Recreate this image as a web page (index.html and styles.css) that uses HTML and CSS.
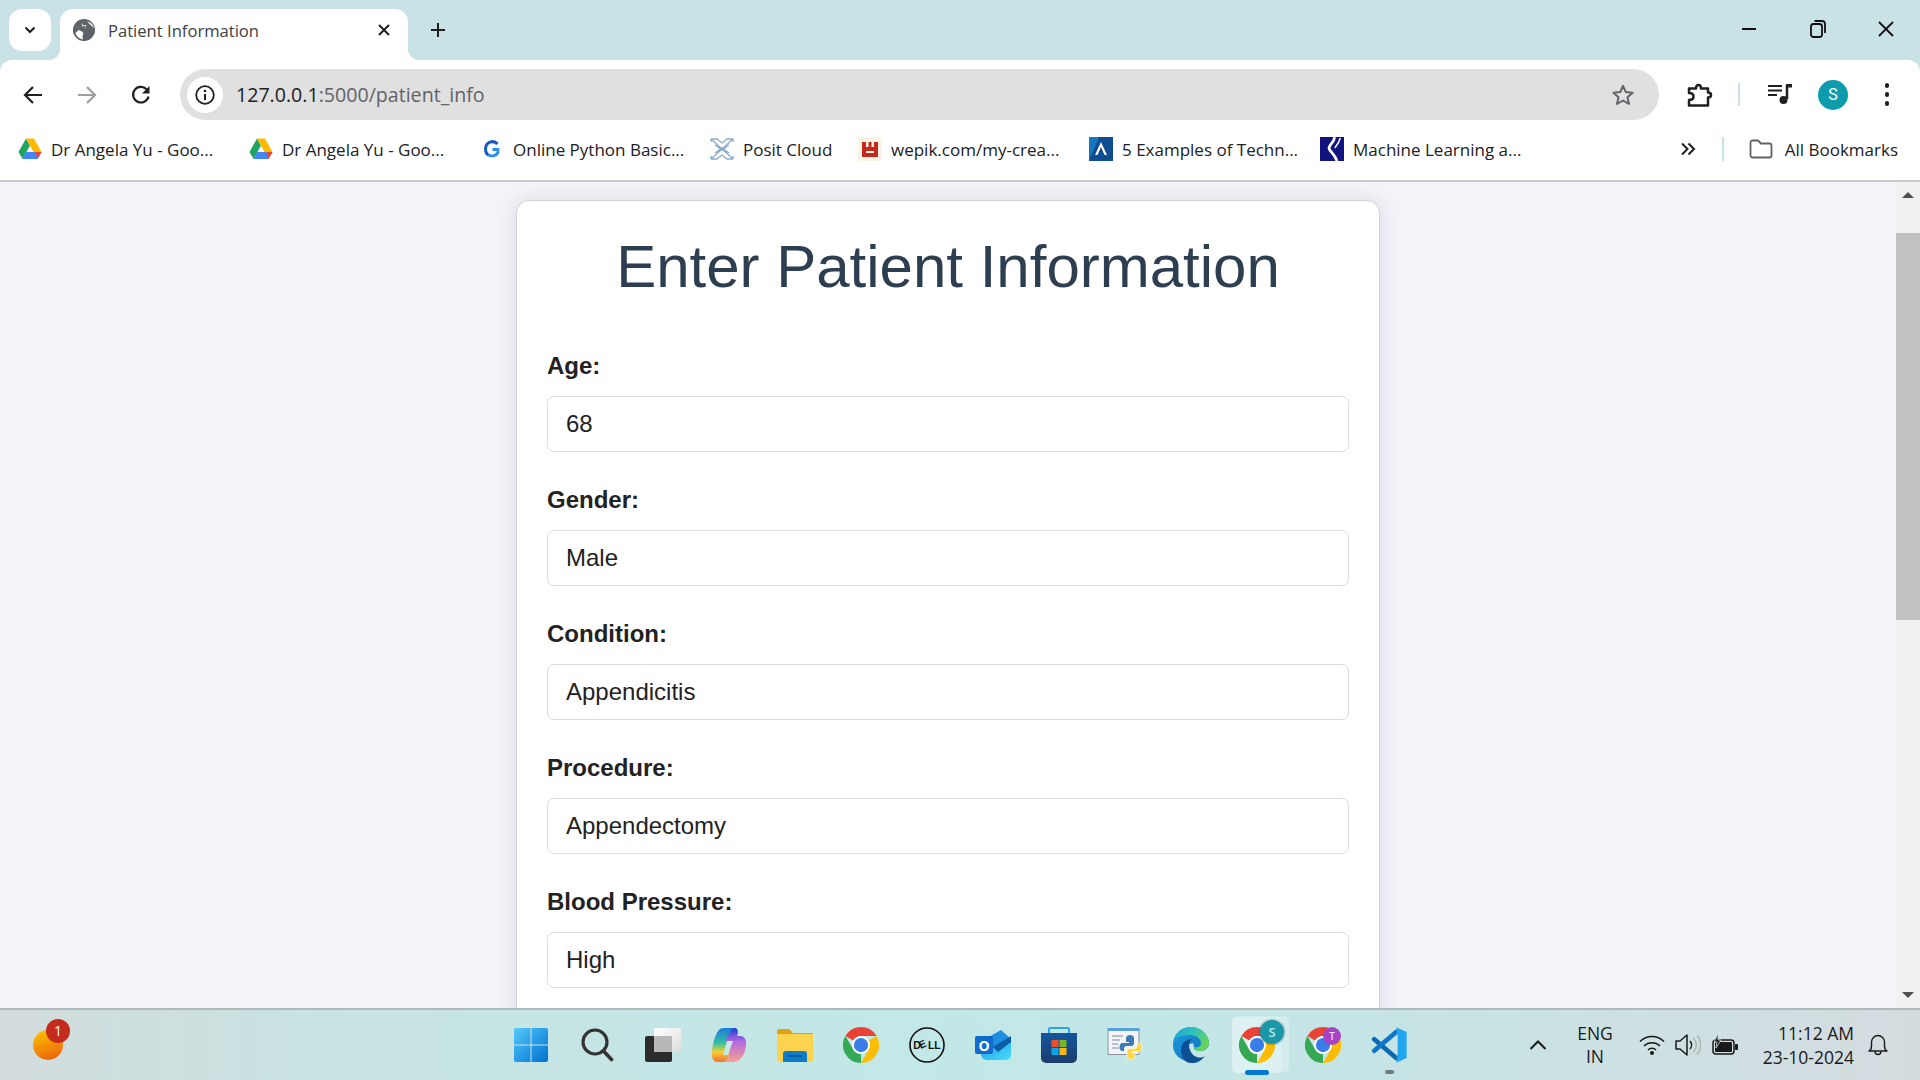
FILE: index.html
```html
<!DOCTYPE html>
<html lang="en">
<head>
    <meta charset="UTF-8">
    <title>Patient Information</title>
    <link rel="stylesheet" href="styles.css">
</head>
<body>
    <svg class="defs" width="0" height="0">
        <defs>
            <symbol id="drive" viewBox="0 0 24 22">
                <path d="M8 0.5 L0.5 14 L4.5 21 L12 7.5z" fill="#1fa463"/>
                <path d="M8 0.5 H16 L23.5 14 H15.5z" fill="#ffba00"/>
                <path d="M4.5 21 L8.2 14 H23.5 L19.5 21z" fill="#4285f4"/>
                <path d="M17.5 14 H23.5 L19.5 21z" fill="#ea4335"/>
            </symbol>
            <symbol id="chrome" viewBox="0 0 48 48">
                <path d="M24 0A24 24 0 0 1 44.8 12H24A12 12 0 0 0 13.6 18L3.2 12A24 24 0 0 1 24 0z" fill="#ea4335"/>
                <path d="M24 0A24 24 0 0 1 44.8 12H24A12 12 0 0 0 13.6 18L3.2 12A24 24 0 0 1 24 0z" fill="#fbbc04" transform="rotate(120 24 24)"/>
                <path d="M24 0A24 24 0 0 1 44.8 12H24A12 12 0 0 0 13.6 18L3.2 12A24 24 0 0 1 24 0z" fill="#34a853" transform="rotate(240 24 24)"/>
                <circle cx="24" cy="24" r="12" fill="#fff"/>
                <circle cx="24" cy="24" r="9.5" fill="#3b7de8"/>
            </symbol>
            <linearGradient id="win-grad" x1="0" y1="0" x2="1" y2="1">
                <stop offset="0" stop-color="#55c9fb"/>
                <stop offset="1" stop-color="#0070d0"/>
            </linearGradient>
            <linearGradient id="copilot-a" x1="0" y1="0" x2="0" y2="1">
                <stop offset="0" stop-color="#1b7ae0"/>
                <stop offset="0.45" stop-color="#35c1a0"/>
                <stop offset="0.7" stop-color="#f6d02c"/>
                <stop offset="1" stop-color="#f0703a"/>
            </linearGradient>
            <linearGradient id="copilot-b" x1="0" y1="0" x2="0" y2="1">
                <stop offset="0" stop-color="#1b3fd0"/>
                <stop offset="0.4" stop-color="#b56ae0"/>
                <stop offset="1" stop-color="#f9a090"/>
            </linearGradient>
            <linearGradient id="edge-grad" x1="0" y1="0" x2="1" y2="1">
                <stop offset="0" stop-color="#1f9fe0"/>
                <stop offset="1" stop-color="#0c68b4"/>
            </linearGradient>
            <linearGradient id="edge-top" x1="0" y1="0" x2="1" y2="0.5">
                <stop offset="0" stop-color="#1aa0d8"/>
                <stop offset="0.5" stop-color="#2fc0c0"/>
                <stop offset="1" stop-color="#63d35c"/>
            </linearGradient>
            <linearGradient id="store-grad" x1="0" y1="0" x2="0" y2="1">
                <stop offset="0" stop-color="#14579e"/>
                <stop offset="1" stop-color="#1c3d6e"/>
            </linearGradient>
            <linearGradient id="outlook-grad" x1="0" y1="0" x2="1" y2="1">
                <stop offset="0" stop-color="#1a9be8"/>
                <stop offset="1" stop-color="#4adcf8"/>
            </linearGradient>
            <linearGradient id="paper-grad" x1="0" y1="0" x2="1" y2="1">
                <stop offset="0" stop-color="#ffffff"/>
                <stop offset="1" stop-color="#dddddd"/>
            </linearGradient>
        </defs>
    </svg>

    <div class="tabstrip">
        <div class="tab-search">
            <svg width="14" height="14" viewBox="0 0 14 14"><path d="M2.5 4.500 7 9l4.500-4.500" fill="none" stroke="#1f1f1f" stroke-width="2"/></svg>
        </div>
        <div class="tab">
            <svg class="tab-icon" width="22" height="22" viewBox="0 0 22 22">
                <circle cx="11" cy="11" r="11" fill="#5f6368"/>
                <path d="M12 1.500 8.500 5l1 2.500 3.500-.5-1 3-4.500.5L4 8 1.500 9.500C1.200 14.500 5 20 10 20.500l1-3.500 3-2-1-3 5-.5 3 1c.5-4-1-9-9-11z" fill="#fff"/>
                <path d="M12.500.2 9 4.500l1 2 3.500-.5-1 3.500-5 .5L4 8 .5 8.500a11 11 0 0 0 .5 7L5.500 11 9 12.500l1.500 2-1 2 .5 5.300h3l.5-5 2.500-2.800-2.500-1.500 5-.5 3 2.500a11 11 0 0 0-.2-5L16.500 5z" fill="#5f6368"/>
            </svg>
            <span class="tab-title">Patient Information</span>
            <svg width="14" height="14" viewBox="0 0 14 14"><path d="M2 2l10 10M12 2 2 12" stroke="#1f1f1f" stroke-width="2"/></svg>
        </div>
        <div class="new-tab">
            <svg width="18" height="18" viewBox="0 0 18 18"><path d="M9 2v14M2 9h14" stroke="#1f1f1f" stroke-width="2"/></svg>
        </div>
        <div class="win-controls">
            <div class="win-btn"><svg width="16" height="16" viewBox="0 0 16 16"><path d="M1 8h14" stroke="#111" stroke-width="2"/></svg></div>
            <div class="win-btn"><svg width="16" height="18" viewBox="0 0 16 18"><rect x="1" y="4" width="11" height="13" rx="2.500" fill="none" stroke="#111" stroke-width="1.800"/><path d="M4.500 1h7.500a3 3 0 0 1 3 3v9" fill="none" stroke="#111" stroke-width="1.800"/></svg></div>
            <div class="win-btn"><svg width="18" height="18" viewBox="0 0 18 18"><path d="M2 2l14 14M16 2 2 16" stroke="#111" stroke-width="1.800"/></svg></div>
        </div>
    </div>

    <div class="toolbar">
        <div class="nav-btn"><svg width="22" height="22" viewBox="0 0 22 22"><path d="M20 11H3M11 3l-8 8 8 8" fill="none" stroke="#1f1f1f" stroke-width="2.200"/></svg></div>
        <div class="nav-btn"><svg width="22" height="22" viewBox="0 0 22 22"><path d="M2 11h17M11 3l8 8-8 8" fill="none" stroke="#a0a0a0" stroke-width="2.200"/></svg></div>
        <div class="nav-btn"><svg width="22" height="22" viewBox="0 0 22 22"><path d="M18.500 12.500A7.800 7.800 0 1 1 16.500 5.200" fill="none" stroke="#1f1f1f" stroke-width="2.200"/><path d="M19.500 2v7.500H12z" fill="#1f1f1f"/></svg></div>
        <div class="omnibox">
            <div class="site-chip">
                <svg width="20" height="20" viewBox="0 0 20 20"><circle cx="10" cy="10" r="8.800" fill="none" stroke="#1f1f1f" stroke-width="1.800"/><path d="M10 9v6" stroke="#1f1f1f" stroke-width="2"/><circle cx="10" cy="6" r="1.300" fill="#1f1f1f"/></svg>
            </div>
            <div class="url"><span class="url-host">127.0.0.1</span>:5000/patient_info</div>
            <svg width="24" height="24" viewBox="0 0 24 24"><path d="M12 2.800l2.800 6.300 6.800.7-5.100 4.500 1.500 6.700-6-3.500-6 3.500 1.500-6.700-5.100-4.500 6.800-.7z" fill="none" stroke="#5f6368" stroke-width="2" stroke-linejoin="round"/></svg>
        </div>
        <div class="tool-ext"><svg width="26" height="26" viewBox="0 0 26 26"><path d="M2 6.500H9C9 4.500 10 3 11.500 3S14 4.500 14 6.500H21V10.500C23 10.500 24 11.500 24 13S23 15.500 21 15.500V23.500H2V18C5 18 6.500 16.500 6.500 14.500S5 11 2 11Z" fill="none" stroke="#1f1f1f" stroke-width="2.500" stroke-linejoin="round"/></svg></div>
        <div class="tool-sep"></div>
        <div class="tool-media"><svg width="24" height="22" viewBox="0 0 24 22"><path d="M0 3h14M0 7.500h14M0 12h9" stroke="#1f1f1f" stroke-width="2"/><path d="M19 2v14" stroke="#1f1f1f" stroke-width="2.500"/><path d="M18 1h6v3.500h-6z" fill="#1f1f1f"/><circle cx="15.500" cy="17" r="4" fill="#1f1f1f"/></svg></div>
        <div class="avatar">S</div>
        <div class="tool-menu"><span></span><span></span><span></span></div>
    </div>

    <div class="bookmarks">
        <div class="bm-list">
            <div class="bm"><svg class="bm-icon" viewBox="0 0 24 24"><use href="#drive"/></svg><span>Dr Angela Yu - Goo...</span></div>
            <div class="bm"><svg class="bm-icon" viewBox="0 0 24 24"><use href="#drive"/></svg><span>Dr Angela Yu - Goo...</span></div>
            <div class="bm"><svg class="bm-icon" viewBox="0 0 24 24"><path d="M17.500 7A6.800 6.800 0 0 0 5.600 11.500C5.400 14.500 6.500 17 8.500 18" fill="none" stroke="#1a56c4" stroke-width="3"/><path d="M8 17.800C12 20 16.500 18.500 18 15.500V12.500H12.500" fill="none" stroke="#2b8ee6" stroke-width="2.800"/></svg><span>Online Python Basic...</span></div>
            <div class="bm"><svg class="bm-icon" viewBox="0 0 24 24"><path d="M1 2 23 22M23 2 1 22M1 2h6l5 4 5-4h6M1 22h6l5-4 5 4h6M1 2v3M23 2v3M1 22v-3M23 22v-3M5 8l7 5 7-5M5 16l7-5 7 5" fill="none" stroke="#8aaccb" stroke-width="1.300"/></svg><span>Posit Cloud</span></div>
            <div class="bm"><svg class="bm-icon" viewBox="0 0 24 24"><rect width="24" height="24" rx="3" fill="#f9f4e4"/><path d="M4 5h4v5h2.500V5h3v5H16V5h4v15H4zM8 14v2h8v-2z" fill="#c5281c" fill-rule="evenodd"/></svg><span>wepik.com/my-crea...</span></div>
            <div class="bm"><svg class="bm-icon" viewBox="0 0 24 24"><rect width="24" height="24" fill="#0f4c90"/><path d="M0 0h10L0 24z" fill="#1676c0"/><path d="M6 18 12 5l6 13h-2.500L12 10l-3.500 8z" fill="#fff"/></svg><span>5 Examples of Techn...</span></div>
            <div class="bm"><svg class="bm-icon" viewBox="0 0 24 24"><rect width="24" height="24" fill="#13137f"/><path d="M14 0C16 4 9 7 9 11C9 14 15 17 17 24" fill="none" stroke="#fff" stroke-width="2.800"/><path d="M20 1C20 5 16 8 15 11" fill="none" stroke="#fff" stroke-width="1.500"/></svg><span>Machine Learning a...</span></div>
        </div>
        <div class="bm-more"><svg width="16" height="16" viewBox="0 0 16 16"><path d="M2 2.500 7.500 8 2 13.500M8.500 2.500 14 8l-5.500 5.500" fill="none" stroke="#1f1f1f" stroke-width="2"/></svg></div>
        <div class="bm-sep"></div>
        <svg class="bm-folder" width="24" height="20" viewBox="0 0 24 20"><path d="M1.500 3.500A2 2 0 0 1 3.500 1.500H9l3 3h8.500a2 2 0 0 1 2 2v10a2 2 0 0 1-2 2h-17a2 2 0 0 1-2-2z" fill="none" stroke="#5f6368" stroke-width="1.800"/></svg>
        <span class="bm-all">All Bookmarks</span>
    </div>

    <div class="viewport">
        <div class="page">
            <div class="card">
                <h1>Enter Patient Information</h1>
                <form>
                    <label>Age:</label>
                    <input type="text" value="68">
                    <label>Gender:</label>
                    <input type="text" value="Male">
                    <label>Condition:</label>
                    <input type="text" value="Appendicitis">
                    <label>Procedure:</label>
                    <input type="text" value="Appendectomy">
                    <label>Blood Pressure:</label>
                    <input type="text" value="High">
                </form>
            </div>
        </div>
        <div class="scrollbar">
            <div class="sb-arrow up"></div>
            <div class="sb-track"><div class="sb-thumb"></div></div>
            <div class="sb-arrow down"></div>
        </div>
    </div>

    <div class="taskbar">
        <div class="tb-left">
            <div class="weather">
                <div class="weather-sun"></div>
                <div class="weather-badge">1</div>
            </div>
        </div>
        <div class="tb-apps">
            <div class="app"><svg width="36" height="36" viewBox="0 0 36 36"><path d="M1 3a2 2 0 0 1 2-2h14.500v16.500H1zM18.500 1H33a2 2 0 0 1 2 2v14.500H18.500zM1 18.500h16.500V35H3a2 2 0 0 1-2-2zM18.500 18.500H35V33a2 2 0 0 1-2 2H18.500z" fill="url(#win-grad)"/></svg></div>
            <div class="app"><svg width="34" height="36" viewBox="0 0 34 36"><circle cx="15" cy="15" r="12" fill="none" stroke="#333" stroke-width="3.200"/><path d="M23.500 24l8 8.500" stroke="#333" stroke-width="3.600" stroke-linecap="round"/></svg></div>
            <div class="app"><svg width="36" height="36" viewBox="0 0 36 36"><rect x="0" y="9" width="27" height="26" rx="2" fill="#2c2c2c"/><rect x="9" y="1" width="27" height="24" rx="2" fill="url(#paper-grad)"/><path d="M9 11a2 2 0 0 1 2-2h16v16H9z" fill="#b8b8b8"/></svg></div>
            <div class="app"><svg width="36" height="36" viewBox="0 0 36 36"><path d="M12 1h11c3 0 4 2 3 5l-9 25c-1 3-3 4-6 4H7C3 35 1 32 1 28 1 18 5 1 12 1z" fill="url(#copilot-a)"/><path d="M15 12c3-2 4-11 8-11 3 0 4 2 4 5l-1 3h3c4 0 6 3 6 7 0 10-5 19-12 19H12c4 0 5-3 6-6z" fill="url(#copilot-b)"/><path d="M16 14h6l-5 14h-5z" fill="#c9e9e8"/></svg></div>
            <div class="app"><svg width="36" height="34" viewBox="0 0 36 34"><path d="M0 3a2 2 0 0 1 2-2h10l4 4h20v27H0z" fill="#e0a20e"/><path d="M0 6h36v26a2 2 0 0 1-2 2H2a2 2 0 0 1-2-2z" fill="#fcd34f"/><path d="M9 23h18a3 3 0 0 1 3 3v8H6v-8a3 3 0 0 1 3-3z" fill="#0f7cc9"/><path d="M11 28h14" stroke="#0a4f8f" stroke-width="1.500"/></svg></div>
            <div class="app"><svg width="36" height="36" viewBox="0 0 36 36"><use href="#chrome"/></svg></div>
            <div class="app"><svg width="36" height="36" viewBox="0 0 36 36"><circle cx="18" cy="18" r="17" fill="none" stroke="#111" stroke-width="1.600"/><text class="dell-text" x="18" y="22" text-anchor="middle" rotate="0 -25 0 0">DELL</text></svg></div>
            <div class="app"><svg width="36" height="30" viewBox="0 0 36 30"><path d="M6 13 36 11V25a5 5 0 0 1-5 5H12a6 6 0 0 1-6-6z" fill="url(#outlook-grad)"/><path d="M12 8 26 0 36 9V12L23 21 12 14z" fill="#1f8ee0"/><path d="M18 17 36 6V12L23 22z" fill="#0c5da8"/><rect x="0" y="6" width="18" height="18" rx="2" fill="#0f6cce"/><text class="outlook-text" x="9" y="20.500" text-anchor="middle">O</text></svg></div>
            <div class="app"><svg width="36" height="36" viewBox="0 0 36 36"><path d="M8 6V2a1 1 0 0 1 1-1h18a1 1 0 0 1 1 1v4" fill="none" stroke="#2ba5e8" stroke-width="2"/><path d="M0 6h36v25a5 5 0 0 1-5 5H5a5 5 0 0 1-5-5z" fill="url(#store-grad)"/><rect x="10.500" y="13" width="7" height="7" fill="#e8512c"/><rect x="18.500" y="13" width="7" height="7" fill="#77b82a"/><rect x="10.500" y="21" width="7" height="7" fill="#0ea5e8"/><rect x="18.500" y="21" width="7" height="7" fill="#fbb81a"/></svg></div>
            <div class="app"><svg width="36" height="36" viewBox="0 0 36 36"><rect x="1" y="1.500" width="31" height="26" fill="#f2f4f6" stroke="#8a939c"/><rect x="1" y="1" width="31" height="3" fill="#5aa0dc"/><path d="M5 9h11M5 13h8M5 17h6M5 21h7" stroke="#a5b0ba" stroke-width="1.300"/><path d="M19 11c0-2 2-3 4-3s4 1 4 3v5c0 2-1 3-3 3h-4c-2 0-3 1-3 3v2h-1.500c-2 0-3-2-3-4s1-4 3-4h6.500v-1h-3z" fill="#3d7ab5"/><path d="M32 16.500c2 0 3 2 3 4s-1 4-3 4h-7v1h3v3c0 3-2 4-4 4s-4-1-4-3v-5c0-2 1-3 3-3h4c2 0 3-1 3-3v-2z" fill="#ffd747" stroke="#fff" stroke-width=".6"/></svg></div>
            <div class="app"><svg width="36" height="36" viewBox="0 0 36 36"><path d="M0 18C0 7 8 0 18 0c10 0 18 8 18 16 0 5-4 8-9 8-4 0-7-2-6-4l-1-4c-5 1-7 4-7 8 0 6 6 12 15 12C8 36 0 28 0 18z" fill="url(#edge-grad)"/><path d="M1 13C3 5 10 0 18 0c10 0 18 8 18 16 0 5-4 8-9 8-3 0-6-1-6-4 3 1 7 0 7-4 0-4-5-8-10-8C12 8 5 9 1 13z" fill="url(#edge-top)"/><path d="M8 23C8 16 13 12 20 12 16 14 15 18 17 23 19 29 26 33 32 29 28 34 24 36 18 36 11 36 8 29 8 23z" fill="#0c4f95"/></svg></div>
            <div class="app app-active">
                <div class="app-stack"></div>
                <div class="app-tile">
                    <svg width="36" height="36" viewBox="0 0 36 36"><use href="#chrome"/></svg>
                    <div class="app-badge badge-s">S</div>
                </div>
                <div class="app-bar"></div>
            </div>
            <div class="app">
                <div class="app-badged">
                    <svg width="36" height="36" viewBox="0 0 36 36"><use href="#chrome"/></svg>
                    <div class="app-badge badge-t">T</div>
                </div>
            </div>
            <div class="app">
                <svg width="36" height="36" viewBox="0 0 100 100"><path d="M9 34 70 86" stroke="#0a69b0" stroke-width="13" stroke-linecap="round"/><path d="M9 66 70 14" stroke="#0f78c8" stroke-width="13" stroke-linecap="round"/><path d="M70 1 99 14V86L70 99 74 74V26z" fill="#22a5ef"/></svg>
                <div class="app-dot"></div>
            </div>
        </div>
        <div class="tb-tray">
            <svg width="18" height="12" viewBox="0 0 18 12"><path d="M1.500 10 9 2.500 16.500 10" fill="none" stroke="#1a1a1a" stroke-width="2"/></svg>
            <div class="tray-lang">ENG<br>IN</div>
            <svg class="tray-wifi" width="26" height="22" viewBox="0 0 26 22"><path d="M1 7.500a17 17 0 0 1 24 0M5 12a11.500 11.500 0 0 1 16 0M9 16a5.500 5.500 0 0 1 8 0" fill="none" stroke="#1a1a1a" stroke-width="1.500"/><circle cx="13" cy="19" r="2" fill="#1a1a1a"/></svg>
            <svg class="tray-sound" width="26" height="24" viewBox="0 0 26 24"><path d="M1 8h4l7-6v20l-7-6H1z" fill="none" stroke="#1a1a1a" stroke-width="1.500" stroke-linejoin="round"/><path d="M15 8a6 6 0 0 1 0 8" fill="none" stroke="#1a1a1a" stroke-width="1.500"/><path d="M18.500 5a10 10 0 0 1 0 14M22 2.500a14 14 0 0 1 0 19" fill="none" stroke="#aab4b4" stroke-width="1.500"/></svg>
            <svg class="tray-battery" width="26" height="22" viewBox="0 0 26 22"><rect x="1" y="6" width="21" height="14" rx="3" fill="none" stroke="#1a1a1a" stroke-width="1.500"/><rect x="3" y="8" width="17" height="10" rx="1" fill="#1a1a1a"/><rect x="23" y="10" width="3" height="6" rx="1" fill="#1a1a1a"/><path d="M6 0 2 8h3l-1 6 5-8H6z" fill="#1a1a1a" stroke="#cddfe0" stroke-width=".8"/></svg>
            <div class="tray-clock">
                <div>11:12 AM</div>
                <div>23-10-2024</div>
            </div>
            <svg class="tray-bell" width="20" height="22" viewBox="0 0 20 22"><path d="M1 17c2-1 2.500-3 2.500-5V8a6.500 6.500 0 0 1 13 0v4c0 2 .5 4 2.500 5z" fill="none" stroke="#1a1a1a" stroke-width="1.400" stroke-linejoin="round"/><path d="M7 17.500a3 3 0 0 0 6 0" fill="none" stroke="#1a1a1a" stroke-width="1.400"/></svg>
        </div>
    </div>
</body>
</html>
```

FILE: styles.css
```css
* {
    box-sizing: border-box;
}
html, body {
    height: 100%;
}
body {
    display: flex;
    flex-direction: column;
    height: 100vh;
    margin: 0;
    overflow: hidden;
    background: #c9e2e6;
    font-family: "Liberation Sans", Arial, sans-serif;
}
.defs {
    position: absolute;
}

/* tab strip */
.tabstrip {
    display: flex;
    flex: none;
    height: 60px;
    padding: 9px 0 0 9px;
}
.tab-search {
    display: flex;
    justify-content: center;
    align-items: center;
    width: 42px;
    height: 42px;
    margin-right: 9px;
    border-radius: 13px;
    background: #fff;
}
.tab {
    display: flex;
    position: relative;
    align-items: center;
    width: 348px;
    padding: 0 17px 9px 13px;
    border-radius: 13px 13px 0 0;
    background: #fff;
}
.tab::before, .tab::after {
    content: "";
    position: absolute;
    bottom: 0;
    width: 12px;
    height: 12px;
}
.tab::before {
    left: -12px;
    background: radial-gradient(circle at 0 0, transparent 12px, #fff 12.5px);
}
.tab::after {
    right: -12px;
    background: radial-gradient(circle at 100% 0, transparent 12px, #fff 12.5px);
}
.tab-icon {
    flex: none;
}
.tab-title {
    flex: 1;
    margin-left: 13px;
    font-family: "Open Sans", sans-serif;
    font-size: 16.6px;
    color: #3c4043;
}
.new-tab {
    display: flex;
    justify-content: center;
    align-items: center;
    width: 40px;
    height: 42px;
    margin-left: 10px;
}
.win-controls {
    display: flex;
    margin: -9px 0 0 auto;
}
.win-btn {
    display: flex;
    justify-content: center;
    align-items: center;
    width: 68px;
    height: 58px;
}
.win-btn:first-child {
    margin-right: 1px;
}

/* toolbar */
.toolbar {
    display: flex;
    flex: none;
    align-items: center;
    height: 60px;
    padding: 9px 24px 0 6px;
    border-radius: 12px 12px 0 0;
    background: #fff;
}
.nav-btn {
    display: flex;
    justify-content: center;
    align-items: center;
    width: 54px;
}
.omnibox {
    display: flex;
    flex: 1;
    align-items: center;
    height: 51px;
    margin-left: 12px;
    padding: 0 24px 0 7px;
    border-radius: 26px;
    background: #e0e0e0;
}
.site-chip {
    display: flex;
    justify-content: center;
    align-items: center;
    width: 36px;
    height: 36px;
    border-radius: 50%;
    background: #fff;
}
.url {
    flex: 1;
    margin-left: 13px;
    font-family: "Open Sans", sans-serif;
    font-size: 19.6px;
    color: #5f6368;
}
.url-host {
    color: #202124;
}
.tool-ext {
    display: flex;
    justify-content: center;
    width: 40px;
    margin-left: 21px;
}
.tool-sep {
    width: 2px;
    height: 23px;
    margin-left: 18px;
    background: #c9e2e6;
}
.tool-media {
    display: flex;
    justify-content: center;
    width: 40px;
    margin: -2px 0 0 20px;
}
.avatar {
    width: 30px;
    height: 30px;
    margin-left: 18px;
    border-radius: 50%;
    background: #0e9bab;
    color: #fff;
    font-family: "Roboto", sans-serif;
    font-size: 16px;
    line-height: 30px;
    text-align: center;
}
.tool-menu {
    display: flex;
    flex-direction: column;
    align-items: center;
    gap: 4.5px;
    width: 18px;
    margin-left: 30px;
}
.tool-menu span {
    width: 4.5px;
    height: 4.5px;
    border-radius: 50%;
    background: #1f1f1f;
}

/* bookmarks */
.bookmarks {
    display: flex;
    flex: none;
    align-items: center;
    height: 62px;
    padding: 0 22px 2px 18px;
    border-bottom: 2px solid #cccccc;
    background: #fff;
    font-family: "Open Sans", sans-serif;
    font-size: 17px;
    color: #202124;
}
.bm-list {
    display: grid;
    grid-template-columns: 231px 231px 230px 148px 231px 231px 230px;
}
.bm {
    display: flex;
    align-items: center;
    gap: 9px;
    white-space: nowrap;
}
.bm-icon {
    flex: none;
    width: 24px;
    height: 24px;
}
.bm-more {
    display: flex;
    justify-content: center;
    width: 24px;
    margin-left: auto;
}
.bm-sep {
    width: 2px;
    height: 24px;
    margin-left: 22px;
    background: #c9e2e6;
}
.bm-folder {
    margin-left: 25px;
}
.bm-all {
    margin-left: 12px;
}

/* page */
.viewport {
    display: flex;
    flex: 1;
    min-height: 0;
    overflow: hidden;
    background: #f3f3f9;
}
.page {
    flex: 1;
    min-width: 0;
}
.card {
    width: 864px;
    margin: 18px auto 0;
    padding: 31px 30px 40px;
    border: 1px solid #d2d2d6;
    border-radius: 13px;
    background: #fff;
    box-shadow: 0 0 20px rgba(0, 0, 0, 0.1);
}
h1 {
    margin: 0 0 51px;
    font-size: 60px;
    font-weight: 400;
    line-height: 69px;
    text-align: center;
    color: #2c3e50;
}
label {
    display: block;
    margin-bottom: 16px;
    font-size: 24px;
    font-weight: 700;
    line-height: 28px;
    color: #222;
}
input {
    display: block;
    width: 100%;
    height: 56px;
    margin-bottom: 34px;
    padding: 0 18px;
    border: 1px solid #dddddf;
    border-radius: 7px;
    background: #fff;
    color: #222;
    font-family: "Liberation Sans", Arial, sans-serif;
    font-size: 24px;
}
.scrollbar {
    display: flex;
    flex: none;
    flex-direction: column;
    align-items: stretch;
    width: 24px;
    background: #f1f1f1;
}
.sb-arrow {
    display: flex;
    flex: none;
    justify-content: center;
    align-items: center;
    height: 26px;
}
.sb-arrow::before {
    content: "";
    border-left: 6px solid transparent;
    border-right: 6px solid transparent;
}
.sb-arrow.up::before {
    border-bottom: 6px solid #505050;
}
.sb-arrow.down::before {
    border-top: 6px solid #505050;
}
.sb-track {
    flex: 1;
    padding-top: 25px;
}
.sb-thumb {
    height: 387px;
    background: #c1c1c1;
}

/* taskbar */
.taskbar {
    display: grid;
    flex: none;
    grid-template-columns: 1fr auto 1fr;
    height: 72px;
    border-top: 2px solid #b0b9b9;
    background: linear-gradient(90deg, #d3dcdc 0%, #c8e3e3 18%, #c1e8e7 50%, #c6e4e5 72%, #d5dce0 100%);
}
.tb-left {
    display: flex;
    align-items: center;
    padding-left: 33px;
}
.weather {
    position: relative;
    width: 30px;
    height: 30px;
}
.weather-sun {
    width: 30px;
    height: 30px;
    border-radius: 50%;
    background: linear-gradient(160deg, #ffc800, #e8590c);
}
.weather-badge {
    position: absolute;
    top: -11px;
    left: 13px;
    width: 24px;
    height: 24px;
    border-radius: 50%;
    background: #c42b1c;
    color: #fff;
    font-family: "Open Sans", sans-serif;
    font-size: 14px;
    line-height: 24px;
    text-align: center;
}
.tb-apps {
    display: flex;
}
.app {
    display: flex;
    position: relative;
    justify-content: center;
    align-items: center;
    width: 66px;
}
.app-active {
    z-index: 1;
}
.app-tile {
    display: flex;
    position: relative;
    justify-content: center;
    align-items: center;
    width: 50px;
    height: 56px;
    border-radius: 5px;
    background: #def1f2;
}
.app-stack {
    position: absolute;
    top: 6px;
    left: 12px;
    width: 53px;
    height: 56px;
    border-radius: 5px;
    background: #d3ecec;
}
.app-badged {
    position: relative;
    display: flex;
}
.app-badge {
    position: absolute;
    border-radius: 50%;
    color: #fff;
    font-family: "Open Sans", sans-serif;
    text-align: center;
}
.badge-s {
    top: 3px;
    right: -2px;
    width: 24px;
    height: 24px;
    background: #1a98a8;
    box-shadow: 0 0 3px rgba(0, 60, 70, 0.6);
    color: #b5e8ea;
    font-size: 13px;
    font-weight: 600;
    line-height: 24px;
}
.badge-t {
    top: 0;
    right: 0;
    width: 18px;
    height: 18px;
    background: #a742c4;
    font-size: 10px;
    line-height: 18px;
}
.app-bar {
    position: absolute;
    bottom: 5px;
    left: 50%;
    width: 24px;
    height: 5px;
    margin-left: -12px;
    border-radius: 3px;
    background: #0078d4;
}
.app-dot {
    position: absolute;
    bottom: 6px;
    left: 50%;
    width: 9px;
    height: 4px;
    margin-left: -4px;
    border-radius: 2px;
    background: #6d7a7a;
}
.dell-text {
    font-family: "Liberation Sans", Arial, sans-serif;
    font-size: 10.5px;
    font-weight: 700;
    fill: #111;
}
.outlook-text {
    font-family: "Open Sans", sans-serif;
    font-size: 14px;
    font-weight: 700;
    fill: #fff;
}
.tb-tray {
    display: flex;
    align-items: center;
    padding-left: 107px;
    font-family: "Open Sans", sans-serif;
    color: #1a1a1a;
}
.tray-lang {
    width: 60px;
    margin-left: 18px;
    font-size: 17.5px;
    line-height: 23px;
    text-align: center;
}
.tray-wifi {
    margin-left: 14px;
}
.tray-sound {
    margin-left: 10px;
}
.tray-battery {
    margin-left: 11px;
}
.tray-clock {
    width: 116px;
    font-size: 17.5px;
    line-height: 24px;
    text-align: right;
}
.tray-bell {
    margin-left: 14px;
}
```
